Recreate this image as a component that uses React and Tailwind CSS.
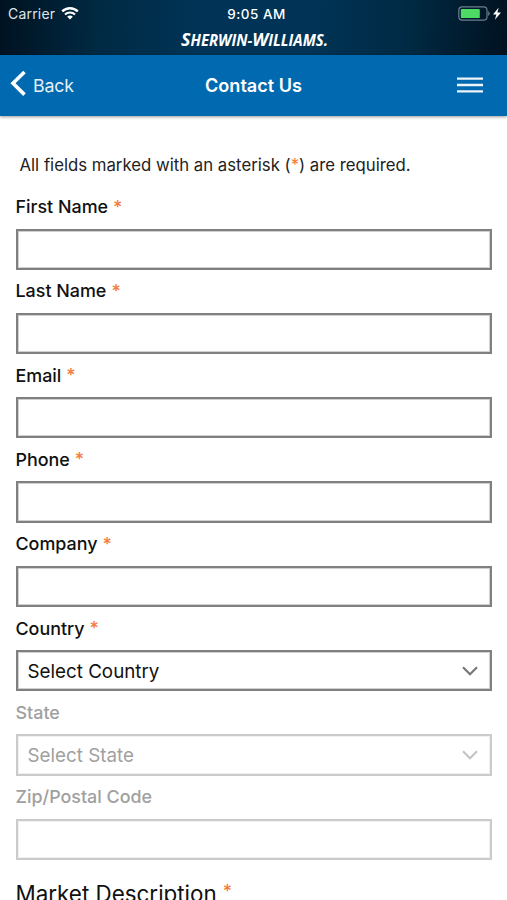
import React from "react";

const fields = [
  { label: "First Name", required: true },
  { label: "Last Name", required: true },
  { label: "Email", required: true },
  { label: "Phone", required: true },
  { label: "Company", required: true },
  { label: "Country", required: true, placeholder: "Select Country" },
  { label: "State", disabled: true, placeholder: "Select State" },
  { label: "Zip/Postal Code", disabled: true },
];

const Asterisk = ({ className = "" }) => (
  <span className={`text-[#f47b3c] ${className}`}>*</span>
);

const WifiIcon = () => (
  <svg width="18" height="13" viewBox="0 0 18 13" fill="none" stroke="white">
    <path d="M1.2 4.4a11.2 11.2 0 0 1 15.6 0" strokeWidth="2.4" />
    <path d="M4 7.5a7.2 7.2 0 0 1 10 0" strokeWidth="2.2" />
    <path d="M9 12.6 6.2 9.8a3.9 3.9 0 0 1 5.6 0z" fill="white" stroke="none" />
  </svg>
);

const BatteryIcon = () => (
  <svg width="44" height="15" viewBox="0 0 44 15">
    <rect x="0.8" y="0.9" width="28.2" height="13.2" rx="3.4" fill="none" stroke="#6b7f8b" strokeWidth="1.2" />
    <rect x="2.8" y="2.9" width="19" height="9.2" rx="1.2" fill="#4cd964" />
    <path d="M30.2 5.2c2 .6 2 4 0 4.6z" fill="#6b7f8b" />
    <path d="M40.7 1.4 35 8.4h3.4l-1.5 5.4L43 6.4h-3.6z" fill="white" />
  </svg>
);

const StatusBar = () => (
  <div className="h-[54.5px] bg-[linear-gradient(93deg,#001220_0%,#002a44_20%,#003355_38%,#003355_62%,#002a44_80%,#001220_100%)] text-white">
    <div className="grid h-[27px] grid-cols-3 items-center pl-[8px] pr-[5px] text-[13.5px]">
      <div className="flex items-center gap-[6px]">
        <span className="text-[14px] tracking-[0.2px] text-[#dfe6eb]">Carrier</span>
        <WifiIcon />
      </div>
      <span className="pl-[3px] pt-[1px] text-center font-medium tracking-[0.5px]">9:05 AM</span>
      <div className="flex justify-end">
        <BatteryIcon />
      </div>
    </div>
    <svg className="-mt-[2px] ml-[180px] block" width="150" height="28" viewBox="0 0 150 28">
      <text
        x="1"
        y="21"
        fill="white"
        textLength="147"
        lengthAdjust="spacingAndGlyphs"
        className="font-['Open_Sans',sans-serif] text-[15.5px] font-bold italic"
      >
        <tspan className="text-[18.5px]">S</tspan>HERWIN-<tspan className="text-[18.5px]">W</tspan>ILLIAMS.
      </text>
    </svg>
  </div>
);

const NavBar = () => (
  <div className="grid h-[61px] grid-cols-3 items-center bg-[#0069af] pl-[10px] pr-[24px] text-white shadow-[0_1px_3px_rgba(0,0,0,0.4)]">
    <div className="flex items-center gap-[7px]">
      <svg className="mb-[3px]" width="16" height="27" viewBox="0 0 16 27" fill="none" stroke="white" strokeWidth="3.6">
        <path d="M14.5 2 3 13.2 14.5 24.6" />
      </svg>
      <span className="pt-[2px] text-[17.8px] tracking-[-0.2px] text-[#e6f0f7]">Back</span>
    </div>
    <h1 className="whitespace-nowrap pl-[14px] pt-[1px] text-center text-[18.1px] font-semibold">
      Contact Us
    </h1>
    <svg className="mb-[1px] justify-self-end" width="26" height="16" viewBox="0 0 26 16" stroke="#eef5fa" strokeWidth="2.3">
      <path d="M0 1.7h26M0 8h26M0 14.3h26" />
    </svg>
  </div>
);

const Field = ({ label, required, disabled, placeholder }) => (
  <div>
    <label
      className={`flex h-[43px] items-center pt-[1px] text-[17.9px] font-medium ${disabled ? "text-[#a0a0a0]" : "text-[#111]"}`}
    >
      {label}
      {required && <Asterisk className="mb-[1px] ml-[5px]" />}
    </label>
    <div
      className={`flex h-[41.3px] items-center justify-between border-2 pl-[10px] pr-[12px] text-[18.8px] ${
        disabled
          ? "border-[#cbcbcb] text-[#a0a0a0] shadow-[inset_0_0_0_1px_#f0f0f0]"
          : "border-[#808080] text-[#111] shadow-[inset_0_0_0_1px_#cfcfcf]"
      }`}
    >
      {placeholder && (
        <>
          <span className="pt-[2px]">{placeholder}</span>
          <svg
            className={disabled ? "text-[#c4c4c4]" : "text-[#777]"}
            width="16"
            height="10"
            viewBox="0 0 16 10"
            fill="none"
            stroke="currentColor"
            strokeWidth="2.2"
          >
            <path d="M1 1.2 8 8.2 15 1.2" />
          </svg>
        </>
      )}
    </div>
  </div>
);

export default function App() {
  return (
    <div className="h-[900px] w-[507px] overflow-hidden bg-white font-['Inter','Liberation_Sans',sans-serif]">
      <StatusBar />
      <NavBar />
      <main className="px-[15.5px] pt-[37px]">
        <p className="mb-[9px] h-[24px] whitespace-nowrap pl-[4px] text-[16.75px] leading-[24px] text-[#222]">
          All fields marked with an asterisk (<Asterisk />) are required.
        </p>
        {fields.map((field) => (
          <Field key={field.label} {...field} />
        ))}
        <h2 className="mt-[16px] whitespace-nowrap text-[22.4px] leading-[30px] text-[#111]">
          Market Description
          <Asterisk className="ml-[6px] align-[5px] text-[17.8px] font-medium" />
        </h2>
      </main>
    </div>
  );
}
